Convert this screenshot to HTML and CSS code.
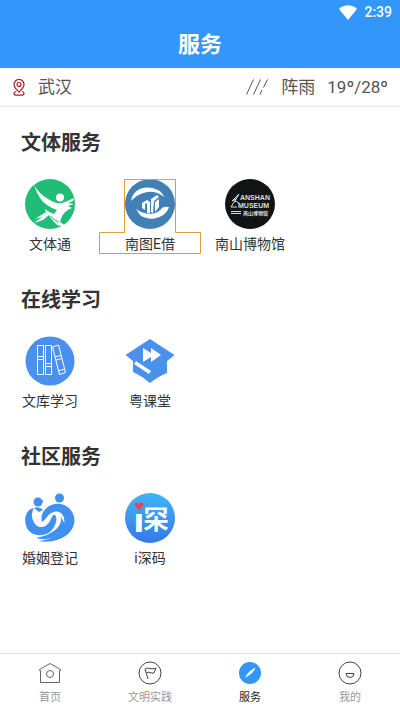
FILE: index.html
```html
<!DOCTYPE html>
<html lang="zh-CN">
<head>
<meta charset="utf-8">
<meta name="viewport" content="width=device-width, initial-scale=1">
<title>服务</title>
<link rel="stylesheet" href="styles.css">
</head>
<body>
<header class="header">
  <div class="status">
    <svg class="wifi" viewBox="0 0 18 15" aria-hidden="true"><path d="M0 4C5-1 13-1 18 4L9 15Z" fill="#fff"/></svg>
    <span>2:39</span>
  </div>
  <h1 class="title">服务</h1>
</header>
<div class="weather">
  <svg class="pin" viewBox="0 0 12 17" fill="none" stroke="#ad1a1f" stroke-width="1.200" aria-hidden="true">
    <path d="M6 13C3 10 1 8.500 1 5.500A5 5 0 0 1 11 5.500C11 8.500 9 10 6 13Z"/><circle cx="6" cy="5.500" r="2"/><path d="M3 12.500C1 13 .8 14 1 15Q1.500 16.200 3.500 16.200H8.500Q10.500 16.200 11 15C11.200 14 11 13 9 12.500"/>
  </svg>
  <span class="city">武汉</span>
  <svg class="rain" viewBox="0 0 22 16" fill="none" stroke="#555" aria-hidden="true"><path d="M.5 15.500L7.500.5M7.500 15.500L14.500.5M14 15.500L16 11M17.500 8.500L21.500.5"/></svg>
  <span>阵雨</span>
  <span class="temp">19º/28º</span>
</div>
<main class="main">
  <section class="section">
    <h2 class="heading">文体服务</h2>
    <div class="grid">
      <a class="item" href="#">
        <svg class="icon" viewBox="0 0 50 50" aria-hidden="true">
          <circle cx="25" cy="25" r="25" fill="#20bd77"/>
          <g fill="#fff"><circle cx="35" cy="18.500" r="4"/>
          <path d="M9 6Q14 15 23 20Q30 25 37 24Q43 22 49 19L48 22L43 24L49 25L43 27L47 29Q41 31 37 37L35 43L41 47Q34 48 30 44Q26 40 24 36L18 41L9 44L17 38L10 40L21 33L20 30Q25 34 29 35L32 31Q26 29 22 26Q14 21 9 6Z"/></g>
          <path d="M26 37Q29 42 34 43" fill="none" stroke="#20bd77"/>
        </svg>
        <span class="label">文体通</span>
      </a>
      <a class="item" href="#">
        <svg class="icon" viewBox="0 0 50 50" aria-hidden="true">
          <circle cx="25" cy="25" r="25" fill="#4180b6"/>
          <path d="M6 22C8 10 20 5 33 11Q37 13 39 18C29 9 15 12 6 22ZM44 28C41 38 26 44 15 36L11 30C22 38 33 35 37 29Q40 27 44 28Z" fill="#fff"/>
          <path d="M17 24L22 21L25 23V34H22V24L20 25V31L17 29ZM26 20L32 16L34 18L29 22L28 34L26 33ZM30 23L34 20V28L30 33Z" fill="#fff"/>
        </svg>
        <span class="label">南图E借</span>
        <svg class="focus" viewBox="0 0 102 76" aria-hidden="true"><path d="M25.500.5H76.500V53.500H101.500V74.500H.5V53.500H25.500Z" fill="none" stroke="#dda038"/></svg>
      </a>
      <a class="item" href="#">
        <svg class="icon" viewBox="0 0 50 50" aria-hidden="true">
          <circle cx="25" cy="25" r="25" fill="#111315"/>
          <g fill="#dedede" class="museum"><text x="15" y="21">ANSHAN</text><text x="13" y="29">MUSEUM</text><text class="museum-cn" x="18" y="36">南山博物馆</text></g>
          <path d="M14 15L7 22L11 20L6 28H12M14 15L10 22L14 24M6 32.500H16M6 34.500H16" fill="none" stroke="#dedede"/>
        </svg>
        <span class="label">南山博物馆</span>
      </a>
    </div>
  </section>
  <section class="section">
    <h2 class="heading">在线学习</h2>
    <div class="grid">
      <a class="item" href="#">
        <svg class="icon" viewBox="0 0 50 50" aria-hidden="true">
          <circle cx="25" cy="25" r="24.500" fill="#4a90ed"/>
          <g fill="none" stroke="#fff"><path d="M12.500 9.500H18.500V38.500H12.500ZM12.500 20.500H18.500M12.500 23.500H18.500M20.500 9.500H26.500V38.500H20.500ZM20.500 27.500H26.500M20.500 30.500H26.500"/><path d="M27.500 11L33.500 9L40.500 36.500L34.500 38.500ZM30 21L36 19.500M31 24L37 22.500M33.500 35L39.500 33"/></g>
        </svg>
        <span class="label">文库学习</span>
      </a>
      <a class="item" href="#">
        <svg class="icon" viewBox="0 0 50 50" aria-hidden="true">
          <path d="M25 3L49.500 19L42 25V37Q34 40 25 47Q17 40 8 36V25L.5 19Z" fill="#4a90ed"/>
          <path d="M11 25L26 35L24 38L9 28ZM18 12L26 17V12L36 19L26 26V21L18 26Z" fill="#fff"/>
        </svg>
        <span class="label">粤课堂</span>
      </a>
    </div>
  </section>
  <section class="section">
    <h2 class="heading">社区服务</h2>
    <div class="grid">
      <a class="item" href="#">
        <svg class="icon" viewBox="0 0 50 50" aria-hidden="true">
          <g fill="#3f90ef"><circle cx="13" cy="9" r="4.500"/><path d="M13 4.500Q16 7 19 8Q16 9 17 12Z"/><circle cx="34.500" cy="5" r="4.500"/>
          <path d="M9 15C-2 17-2 33 5 39C12 44 22 43 27 37C31 32 33 25 30 22C28 21 27 24 25 28C22 34 15 36 11 32C6 27 6 20 9 15Z"/>
          <path d="M9 15Q14 13 18 17L14 19Q11 17 9 15Z"/>
          <path d="M17 29C14 18 25 9 36 11C46 13 51 23 49 31C46 44 29 51 13 48C26 47 37 41 39 31C41 23 35 17 29 19C23 20 21 27 17 29Z"/>
          <path d="M36 23C38 33 28 42 11 45C24 49 37 42 40 32Z"/></g>
        </svg>
        <span class="label">婚姻登记</span>
      </a>
      <a class="item" href="#">
        <svg class="icon" viewBox="0 0 50 50" aria-hidden="true">
          <defs><linearGradient id="sky" x1="0" y1="0" x2="0" y2="1"><stop offset="0" stop-color="#40b5f7"/><stop offset="1" stop-color="#3678e6"/></linearGradient></defs>
          <circle cx="25" cy="25" r="25" fill="url(#sky)"/>
          <text class="code-i" x="9" y="39">ı</text><text class="code-cn" x="18" y="36">&#x7F59;</text>
          <path d="M14 17L9.500 12.500C8.500 10 12 8.500 14 11C16 8.500 19.500 10 18.500 12.500Z" fill="#f0444c"/>
        </svg>
        <span class="label">i深码</span>
      </a>
    </div>
  </section>
</main>
<nav class="nav">
  <a class="tab" href="#">
    <svg class="tab-icon" viewBox="0 0 24 24" fill="none" stroke="#666" aria-hidden="true"><path d="M1.500 8.500L12 2.500L22.500 8.500V9.500H21.500V21.500H2.500V9.500H1.500Z"/><circle cx="12" cy="13" r="3.500"/></svg>
    <span>首页</span>
  </a>
  <a class="tab" href="#">
    <svg class="tab-icon" viewBox="0 0 24 24" fill="none" stroke="#444" aria-hidden="true"><circle cx="12" cy="12" r="11"/><path d="M7 8Q9 6.500 12 7.500T18 7L16 12Q14 12.500 12 11.500T8.500 12M7 8L10 18"/></svg>
    <span>文明实践</span>
  </a>
  <a class="tab active" href="#" aria-current="page">
    <svg class="tab-icon" viewBox="0 0 24 24" aria-hidden="true"><circle cx="12" cy="12" r="11" fill="#3396fb"/><path d="M17.500 6.500Q16 12 7 17Q9 11 17.500 6.500Z" fill="#fff"/></svg>
    <span>服务</span>
  </a>
  <a class="tab" href="#">
    <svg class="tab-icon" viewBox="0 0 24 24" fill="none" stroke="#444" aria-hidden="true"><circle cx="12" cy="12" r="11"/><path d="M8 12.500H16Q16 16.500 12 16.500T8 12.500Z"/></svg>
    <span>我的</span>
  </a>
</nav>
</body>
</html>
```
FILE: styles.css
```css
* { box-sizing: border-box; }
body {
  margin: 0;
  min-height: 100vh;
  display: flex;
  flex-direction: column;
  background: #fff;
  color: #333;
  font-family: Roboto, "Noto Sans CJK SC", sans-serif;
}
a { color: inherit; text-decoration: none; }
svg { display: block; flex: none; }

.header { background: #3396fb; color: #fff; }
.status {
  display: flex;
  justify-content: flex-end;
  align-items: center;
  gap: 7px;
  height: 24px;
  padding-right: 8px;
  font-size: 14px;
  font-weight: 500;
}
.wifi { width: 18px; height: 15px; }
.title {
  margin: 0;
  padding-bottom: 2px;
  font-size: 22px;
  font-weight: 700;
  line-height: 42px;
  text-align: center;
}

.weather {
  display: flex;
  align-items: center;
  padding: 0 12px 0 13px;
  border-bottom: 1px solid #e5e5e5;
  color: #555;
  font-size: 17px;
  line-height: 38px;
}
.pin { width: 12px; height: 17px; }
.city { margin-left: 13px; margin-right: auto; }
.rain { width: 22px; height: 16px; margin-right: 13px; }
.temp { margin-left: 12px; }

.main { flex: 1; }
.section { padding: 22px 0 10px; }
.heading {
  margin: 0 0 22px;
  padding-left: 21px;
  font-size: 20px;
  font-weight: 700;
  line-height: 28px;
}
.grid { display: grid; grid-template-columns: repeat(4, 1fr); }
.item {
  position: relative;
  display: flex;
  flex-direction: column;
  align-items: center;
  gap: 5px;
}
.icon { width: 50px; height: 50px; }
.label { font-size: 14px; line-height: 20px; white-space: nowrap; }
.focus {
  position: absolute;
  top: 0;
  left: -1px;
  width: 102px;
  height: 76px;
}
.museum { font: 700 7px "Liberation Sans", sans-serif; }
.museum-cn { font: 700 5px "Noto Sans CJK SC", sans-serif; }
.code-i { fill: #fff; font: 900 34px Roboto, sans-serif; }
.code-cn { fill: #fff; font: 700 26px "Noto Sans CJK SC", sans-serif; }

.nav {
  display: grid;
  grid-template-columns: repeat(4, 1fr);
  border-top: 1px solid #ddd;
  color: #999;
}
.tab {
  display: flex;
  flex-direction: column;
  align-items: center;
  gap: 5px;
  padding: 7px 0 4px;
  font-size: 11px;
  line-height: 16px;
}
.tab-icon { width: 24px; height: 24px; }
.active { color: #222; }
```
